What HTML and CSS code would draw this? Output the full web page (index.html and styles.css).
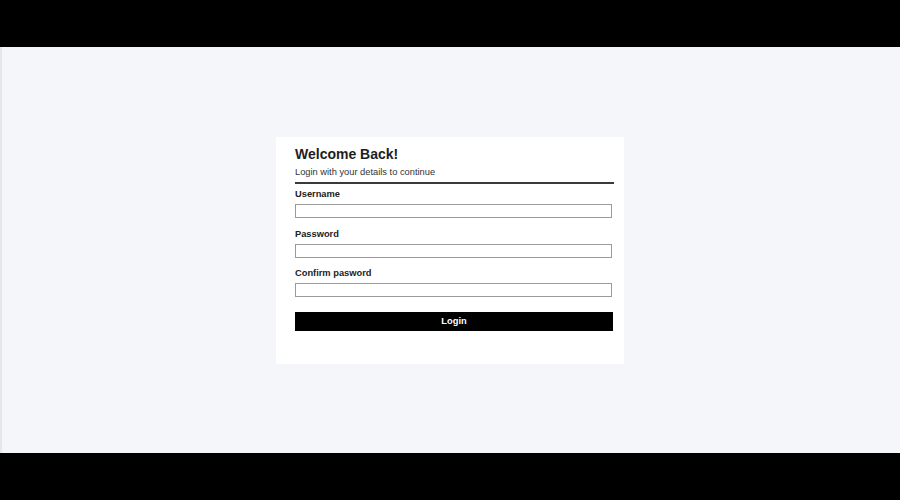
FILE: index.html
```html
<!DOCTYPE html>
<html lang="en">
<head>
<meta charset="utf-8">
<title>Login</title>
<link rel="stylesheet" href="styles.css">
</head>
<body>
<div class="bar"></div>
<main class="stage">
  <form class="card">
    <header class="card-head">
      <h1 class="title">Welcome Back!</h1>
      <p class="subtitle">Login with your details to continue</p>
    </header>
    <div class="field">
      <label class="label" for="u">Username</label>
      <input class="input" id="u" type="text">
    </div>
    <div class="field">
      <label class="label" for="p">Password</label>
      <input class="input" id="p" type="password">
    </div>
    <div class="field">
      <label class="label" for="c">Confirm pasword</label>
      <input class="input" id="c" type="password">
    </div>
    <button class="btn" type="button">Login</button>
  </form>
</main>
<div class="bar"></div>
</body>
</html>
```
FILE: styles.css
```css
* { box-sizing: border-box; }
html, body { margin: 0; padding: 0; }
body {
  width: 900px;
  height: 500px;
  background: #000;
  font-family: "Liberation Sans", Arial, sans-serif;
  color: #222;
  display: flex;
  flex-direction: column;
}
.bar { height: 47px; background: #000; flex: none; }
.stage {
  height: 406px;
  background: #f5f6fa;
  border-left: 2px solid #e6e7eb;
  display: flex;
  align-items: center;
  justify-content: center;
}
.card {
  width: 348px;
  height: 227px;
  background: #fff;
  padding: 10px 10px 0 19px;
  margin-left: -2px;
  margin-top: 1px;
}
.card-head {
  border-bottom: 2px solid #3a3a3a;
  padding-bottom: 4px;
  margin-bottom: 5.3px;
}
.title {
  margin: 0;
  font-size: 14px;
  line-height: 15px;
  font-weight: bold;
  color: #1e1e1e;
}
.subtitle {
  margin: 5.2px 0 0;
  font-size: 9.3px;
  line-height: 11px;
  color: #333;
}
.field { margin-bottom: 10.5px; }
.label {
  display: block;
  font-size: 9.3px;
  line-height: 11px;
  font-weight: bold;
  color: #222;
  margin-bottom: 4px;
}
.input {
  display: block;
  width: 317px;
  height: 14px;
  margin: 0;
  padding: 0;
  border: 1px solid #9a9a9a;
  background: #fff;
  outline: none;
}
.btn {
  display: block;
  width: 318px;
  height: 19px;
  margin: 14.5px 0 0;
  padding: 0;
  border: none;
  background: #000;
  color: #fff;
  font-family: "Liberation Sans", Arial, sans-serif;
  font-size: 9.3px;
  font-weight: bold;
  line-height: 19px;
  text-align: center;
}
```
